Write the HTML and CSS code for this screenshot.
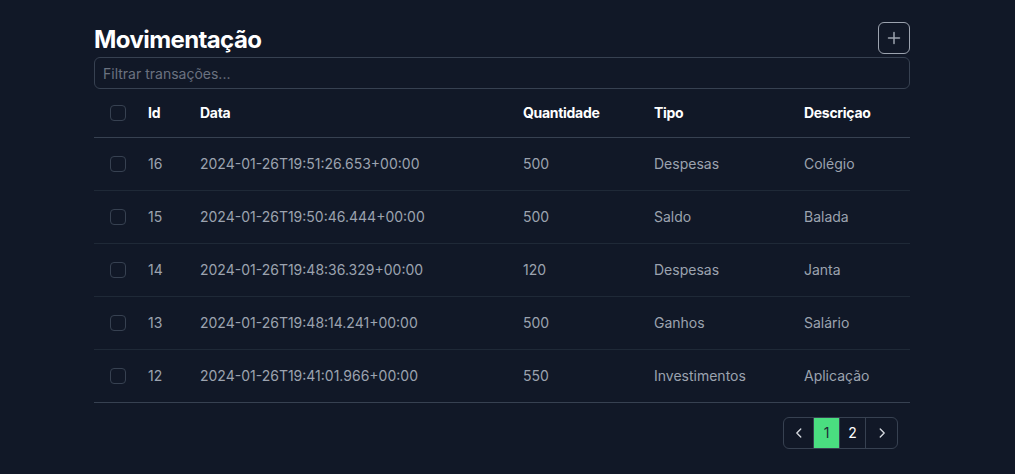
FILE: index.html
```html
<!DOCTYPE html>
<html lang="pt">
<head>
<meta charset="utf-8">
<link rel="stylesheet" href="styles.css">
</head>
<body>
<main class="wrap">
  <div class="top">
    <h1 class="title">Movimentação</h1>
    <button class="add" aria-label="Adicionar">
      <svg width="16" height="16" viewBox="0 0 16 16"><path d="M8 2.5v11M2.5 8h11" stroke="currentColor" stroke-width="1.5" stroke-linecap="round"/></svg>
    </button>
  </div>
  <input class="filter" type="text" placeholder="Filtrar transações...">
  <table class="tbl">
    <thead>
      <tr><th class="c-cb"><span class="cb"></span></th><th class="c-id">Id</th><th class="c-data">Data</th><th class="c-q">Quantidade</th><th class="c-t">Tipo</th><th>Descriçao</th></tr>
    </thead>
    <tbody>
      <tr><td class="c-cb"><span class="cb"></span></td><td>16</td><td>2024-01-26T19:51:26.653+00:00</td><td>500</td><td>Despesas</td><td>Colégio</td></tr>
      <tr><td class="c-cb"><span class="cb"></span></td><td>15</td><td>2024-01-26T19:50:46.444+00:00</td><td>500</td><td>Saldo</td><td>Balada</td></tr>
      <tr><td class="c-cb"><span class="cb"></span></td><td>14</td><td>2024-01-26T19:48:36.329+00:00</td><td>120</td><td>Despesas</td><td>Janta</td></tr>
      <tr><td class="c-cb"><span class="cb"></span></td><td>13</td><td>2024-01-26T19:48:14.241+00:00</td><td>500</td><td>Ganhos</td><td>Salário</td></tr>
      <tr><td class="c-cb"><span class="cb"></span></td><td>12</td><td>2024-01-26T19:41:01.966+00:00</td><td>550</td><td>Investimentos</td><td>Aplicação</td></tr>
    </tbody>
  </table>
  <div class="pager-row">
    <nav class="pager">
      <span class="pg nav"><svg width="14" height="14" viewBox="0 0 16 16"><path d="M10 3.5L5.5 8l4.5 4.5" fill="none" stroke="currentColor" stroke-width="1.6" stroke-linecap="round" stroke-linejoin="round"/></svg></span>
      <span class="pg active">1</span>
      <span class="pg">2</span>
      <span class="pg nav next"><svg width="14" height="14" viewBox="0 0 16 16"><path d="M6 3.5L10.5 8 6 12.5" fill="none" stroke="currentColor" stroke-width="1.6" stroke-linecap="round" stroke-linejoin="round"/></svg></span>
    </nav>
  </div>
</main>
</body>
</html>
```
FILE: styles.css
```css
* { box-sizing: border-box; }
html, body { margin: 0; background: #111827; }
body { font-family: Inter, "Noto Sans", sans-serif; color: #9ca3af; }
.wrap { width: 816px; margin: 0 0 0 94px; padding-top: 22px; }
.top { display: flex; justify-content: space-between; align-items: flex-end; height: 32px; }
.title { margin: 0; font-size: 24px; font-weight: 700; color: #ffffff; line-height: 32px; letter-spacing: -0.6px; position: relative; top: 2px; }
.add { width: 32px; height: 32px; border: 1px solid #9ca3af; border-radius: 6px; background: transparent; color: #9ca3af; display: flex; align-items: center; justify-content: center; padding: 0; }
.filter { display: block; width: 100%; height: 32px; margin-top: 3px; border: 1px solid #374151; border-radius: 6px; background: #111827; padding: 0 8px; font-family: inherit; font-size: 14px; color: #e5e7eb; }
.filter::placeholder { color: #6b7280; }
.tbl { width: 100%; border-collapse: collapse; font-size: 14px; }
.tbl th { text-align: left; color: #ffffff; font-weight: 700; height: 48px; padding: 0; letter-spacing: -0.3px; border-bottom: 1px solid #374151; }
.tbl td { height: 53px; padding: 0; border-bottom: 1px solid #1f2937; }
.tbl tbody tr:last-child td { border-bottom-color: #374151; }
.c-cb { width: 54px; padding-left: 16px !important; }
.c-id { width: 52px; }
.c-data { width: 323px; }
.c-q { width: 131px; }
.c-t { width: 150px; }
.cb { display: block; width: 16px; height: 16px; border: 1px solid #374151; border-radius: 4px; }
.pager-row { display: flex; justify-content: flex-end; padding-top: 14px; padding-right: 12px; }
.pager { display: flex; height: 32px; border: 1px solid #374151; border-radius: 6px; overflow: hidden; }
.pg { display: flex; align-items: center; justify-content: center; width: 26px; font-size: 14px; color: #ffffff; border-right: 1px solid #374151; }
.pg.nav { width: 30px; color: #d1d5db; }
.pg.next { width: 31px; border-right: none; }
.pg.active { background: #4ade80; color: #1f2937; }
```
